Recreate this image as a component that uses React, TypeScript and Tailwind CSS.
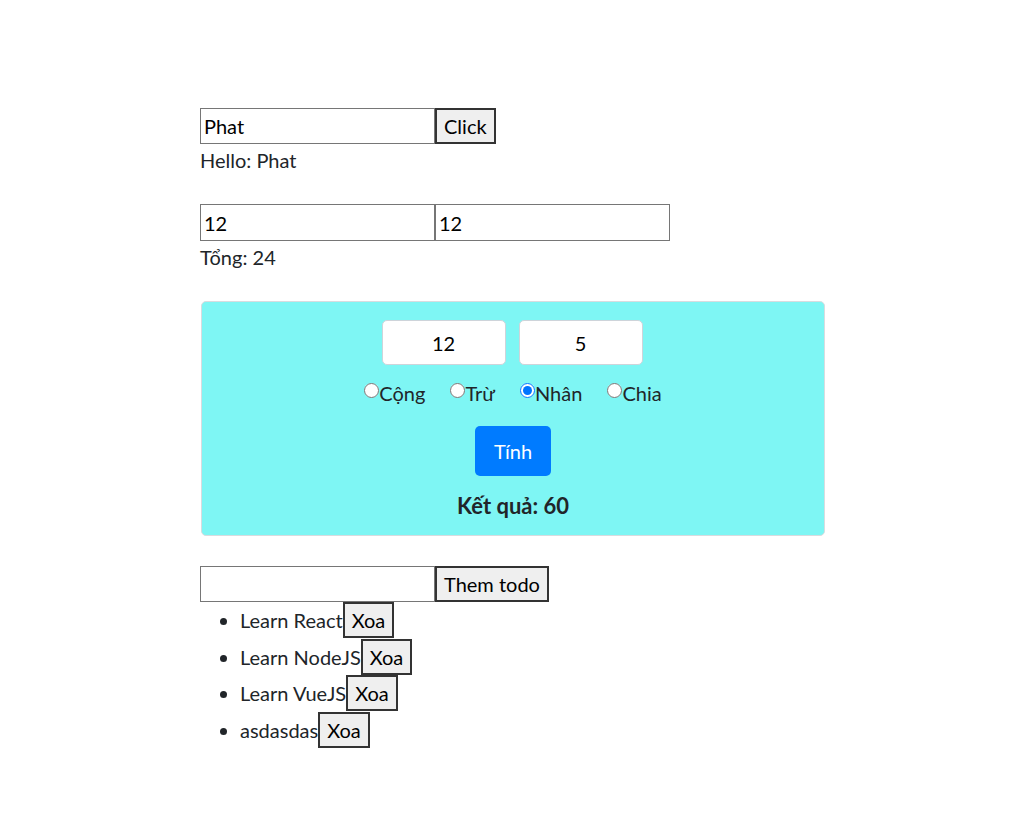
import React from "react";

export default function App() {
  const todos = ["Learn React", "Learn NodeJS", "Learn VueJS", "asdasdas"];
  return (
    <div className="min-h-[840px] bg-white text-[20px] leading-[30px] text-[#212529] font-['Lato','Noto_Sans',sans-serif]">
      <div className="ml-[200px] w-[625px] pt-[108px]">
        <div className="flex">
          <input readOnly value="Phat" className="w-[235px] h-[36px] border border-[#767676] px-[3px] text-[20px] text-black outline-none" />
          <button className="h-[36px] px-[7px] border-2 border-[#333] bg-[#efefef] text-black text-[20px] leading-none">Click</button>
        </div>
        <div className="mt-[1px]">Hello: Phat</div>

        <div className="flex mt-[29px]">
          <input readOnly value="12" className="w-[235px] h-[37px] border border-[#767676] px-[3px] text-[20px] text-black outline-none" />
          <input readOnly value="12" className="w-[235px] h-[37px] border border-[#767676] px-[3px] text-[20px] text-black outline-none" />
        </div>
        <div className="mt-[1px]">Tổng: 24</div>

        <div className="mt-[29px] ml-[1px] w-[624px] h-[235px] bg-[#7ef6f4] border border-[#d8dcdf] rounded-[5px] flex flex-col items-center pt-[18px]">
          <div className="flex gap-[13px] -ml-[2px]">
            <input readOnly value="12" className="w-[124px] h-[45px] bg-white border border-[#ced4da] rounded-[5px] text-center text-[20px] text-black outline-none" />
            <input readOnly value="5" className="w-[124px] h-[45px] bg-white border border-[#ced4da] rounded-[5px] text-center text-[20px] text-black outline-none" />
          </div>
          <div className="flex mt-[13px] gap-[25px] h-[30px] items-center">
            {["Cộng", "Trừ", "Nhân", "Chia"].map((l) => (
              <label key={l} className="flex items-center">
                <input type="radio" name="op" readOnly checked={l === "Nhân"} className="w-[15px] h-[15px] m-0 mb-[5px] accent-[#0075ff]" />
                <span>{l}</span>
              </label>
            ))}
          </div>
          <button className="mt-[18px] w-[76px] h-[50px] bg-[#007bff] text-white rounded-[5px] text-[20px]">Tính</button>
          <div className="mt-[15px] font-bold text-[22px]">Kết quả: 60</div>
        </div>

        <div className="flex mt-[30px]">
          <input readOnly value="" className="w-[235px] h-[36px] border border-[#767676] px-[3px] text-[20px] outline-none" />
          <button className="h-[36px] px-[7px] border-2 border-[#333] bg-[#efefef] text-black text-[20px] leading-none">Them todo</button>
        </div>
        <ul className="list-disc pl-[40px] mt-0">
          {todos.map((t) => (
            <li key={t} className="h-[36.5px] leading-[36px]">
              <span>{t}</span>
              <button className="h-[36px] px-[7px] border-2 border-[#333] bg-[#efefef] text-black text-[20px] leading-none align-top">Xoa</button>
            </li>
          ))}
        </ul>
      </div>
    </div>
  );
}
